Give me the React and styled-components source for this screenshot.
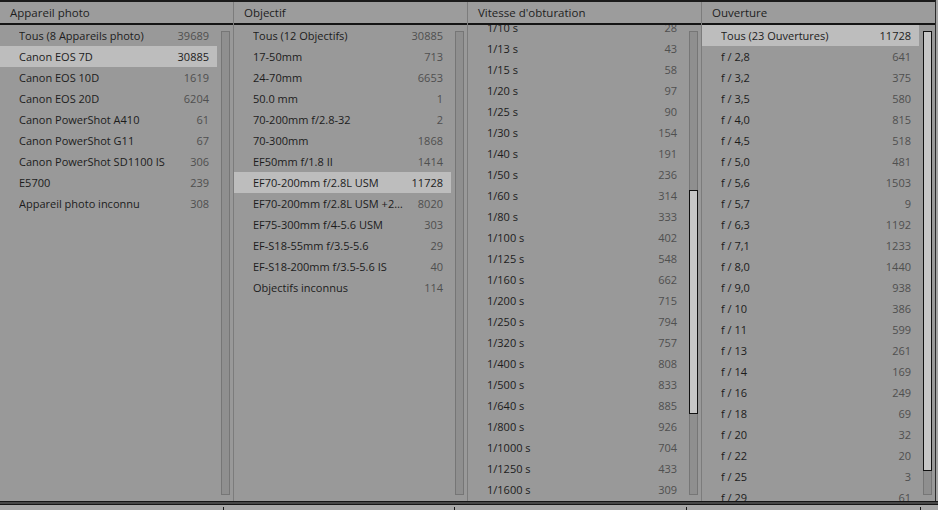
import React from 'react';
import styled, { createGlobalStyle } from 'styled-components';

const GlobalStyle = createGlobalStyle`
  html, body {
    margin: 0;
    padding: 0;
    background: #a3a3a3;
  }
  body {
    font-family: 'Open Sans', 'DejaVu Sans', sans-serif;
  }
`;

const Frame = styled.div`
  width: 938px;
  height: 510px;
  display: flex;
  flex-direction: column;
  overflow: hidden;
  background: #a3a3a3;
`;

const Browser = styled.div`
  width: 935px;
  height: 499px;
  display: grid;
  grid-template-columns: 233px 234px 234px 1fr;
  border-top: 2px solid #1b1b1b;
  border-right: 1px solid #2a2a2a;
  background: #999999;
`;

const Column = styled.div`
  display: flex;
  flex-direction: column;
  min-height: 0;
  border-left: ${(p) => (p.$first ? 'none' : '1px solid #7c7c7c')};
`;

const Header = styled.div`
  height: 21px;
  flex: none;
  display: flex;
  align-items: center;
  padding-left: 10px;
  border-bottom: 2px solid #141414;
  background: #9c9c9c;
  color: #1e1e1e;
  font-size: 11.5px;
`;

const Body = styled.div`
  flex: 1;
  display: flex;
  min-height: 0;
`;

const List = styled.div`
  flex: 1;
  min-width: 0;
  overflow: hidden;
`;

const Rows = styled.div`
  margin-top: ${(p) => p.$offset || 0}px;
`;

const Row = styled.div`
  height: 21px;
  display: flex;
  align-items: center;
  justify-content: space-between;
  padding: 0 8px 0 19px;
  font-size: 11px;
  color: #1c1c1c;
  background: ${(p) => (p.$selected ? '#bdbdbd' : 'transparent')};
`;

const Name = styled.span`
  white-space: nowrap;
  overflow: hidden;
  text-overflow: ellipsis;
  padding-right: 12px;
`;

const Count = styled.span`
  flex: none;
  color: ${(p) => (p.$selected ? '#1c1c1c' : '#4f4f4f')};
`;

const Gutter = styled.div`
  width: 16px;
  flex: none;
  padding: 6px 3px 6px 4px;
  box-sizing: border-box;
  display: flex;
`;

const Track = styled.div`
  position: relative;
  flex: 1;
  background: #8f8f8f;
  border: 1px solid #767676;
`;

const Thumb = styled.div`
  position: absolute;
  left: -1px;
  right: -1px;
  background: #c6c6c6;
  border: 1px solid #111;
`;

const Bottom = styled.div`
  flex: none;
  height: 9px;
  display: flex;
  flex-direction: column;
  border-top: 1px solid #151515;
`;

const Band = styled.div`
  height: 2px;
  background: #464646;
  border-bottom: 1px solid #151515;
`;

const Ticks = styled.div`
  flex: 1;
  display: grid;
  grid-template-columns: 224px 231px 232px 234px 1fr;
  background: #a6a6a6;
`;

const Tick = styled.div`
  border-right: ${(p) => (p.$last ? 'none' : '1px solid #1a1a1a')};
  margin-top: 2px;
`;

const columns = [
  {
    title: 'Appareil photo',
    items: [
      ['Tous (8 Appareils photo)', '39689'],
      ['Canon EOS 7D', '30885', true],
      ['Canon EOS 10D', '1619'],
      ['Canon EOS 20D', '6204'],
      ['Canon PowerShot A410', '61'],
      ['Canon PowerShot G11', '67'],
      ['Canon PowerShot SD1100 IS', '306'],
      ['E5700', '239'],
      ['Appareil photo inconnu', '308'],
    ],
  },
  {
    title: 'Objectif',
    items: [
      ['Tous (12 Objectifs)', '30885'],
      ['17-50mm', '713'],
      ['24-70mm', '6653'],
      ['50.0 mm', '1'],
      ['70-200mm f/2.8-32', '2'],
      ['70-300mm', '1868'],
      ['EF50mm f/1.8 II', '1414'],
      ['EF70-200mm f/2.8L USM', '11728', true],
      ['EF70-200mm f/2.8L USM +2x III', '8020'],
      ['EF75-300mm f/4-5.6 USM', '303'],
      ['EF-S18-55mm f/3.5-5.6', '29'],
      ['EF-S18-200mm f/3.5-5.6 IS', '40'],
      ['Objectifs inconnus', '114'],
    ],
  },
  {
    title: "Vitesse d'obturation",
    offset: -8,
    thumb: { top: 158, height: 222 },
    items: [
      ['1/10 s', '28'],
      ['1/13 s', '43'],
      ['1/15 s', '58'],
      ['1/20 s', '97'],
      ['1/25 s', '90'],
      ['1/30 s', '154'],
      ['1/40 s', '191'],
      ['1/50 s', '236'],
      ['1/60 s', '314'],
      ['1/80 s', '333'],
      ['1/100 s', '402'],
      ['1/125 s', '548'],
      ['1/160 s', '662'],
      ['1/200 s', '715'],
      ['1/250 s', '794'],
      ['1/320 s', '757'],
      ['1/400 s', '808'],
      ['1/500 s', '833'],
      ['1/640 s', '885'],
      ['1/800 s', '926'],
      ['1/1000 s', '704'],
      ['1/1250 s', '433'],
      ['1/1600 s', '309'],
      ['1/2000 s', '287'],
    ],
  },
  {
    title: 'Ouverture',
    thumb: { top: -1, height: 438 },
    items: [
      ['Tous (23 Ouvertures)', '11728', true],
      ['f / 2,8', '641'],
      ['f / 3,2', '375'],
      ['f / 3,5', '580'],
      ['f / 4,0', '815'],
      ['f / 4,5', '518'],
      ['f / 5,0', '481'],
      ['f / 5,6', '1503'],
      ['f / 5,7', '9'],
      ['f / 6,3', '1192'],
      ['f / 7,1', '1233'],
      ['f / 8,0', '1440'],
      ['f / 9,0', '938'],
      ['f / 10', '386'],
      ['f / 11', '599'],
      ['f / 13', '261'],
      ['f / 14', '169'],
      ['f / 16', '249'],
      ['f / 18', '69'],
      ['f / 20', '32'],
      ['f / 22', '20'],
      ['f / 25', '3'],
      ['f / 29', '61'],
    ],
  },
];

const App = () => {
  return (
    <Frame>
      <GlobalStyle />
      <Browser>
        {columns.map((col, i) => (
          <Column key={col.title} $first={i === 0}>
            <Header>{col.title}</Header>
            <Body>
              <List>
                <Rows $offset={col.offset}>
                  {col.items.map(([name, count, selected]) => (
                    <Row key={name} $selected={selected}>
                      <Name>{name}</Name>
                      <Count $selected={selected}>{count}</Count>
                    </Row>
                  ))}
                </Rows>
              </List>
              <Gutter>
                <Track>
                  {col.thumb && (
                    <Thumb style={{ top: col.thumb.top, height: col.thumb.height }} />
                  )}
                </Track>
              </Gutter>
            </Body>
          </Column>
        ))}
      </Browser>
      <Bottom>
        <Band />
        <Ticks>
          <Tick />
          <Tick />
          <Tick />
          <Tick />
          <Tick $last />
        </Ticks>
      </Bottom>
    </Frame>
  );
};

export default App;
